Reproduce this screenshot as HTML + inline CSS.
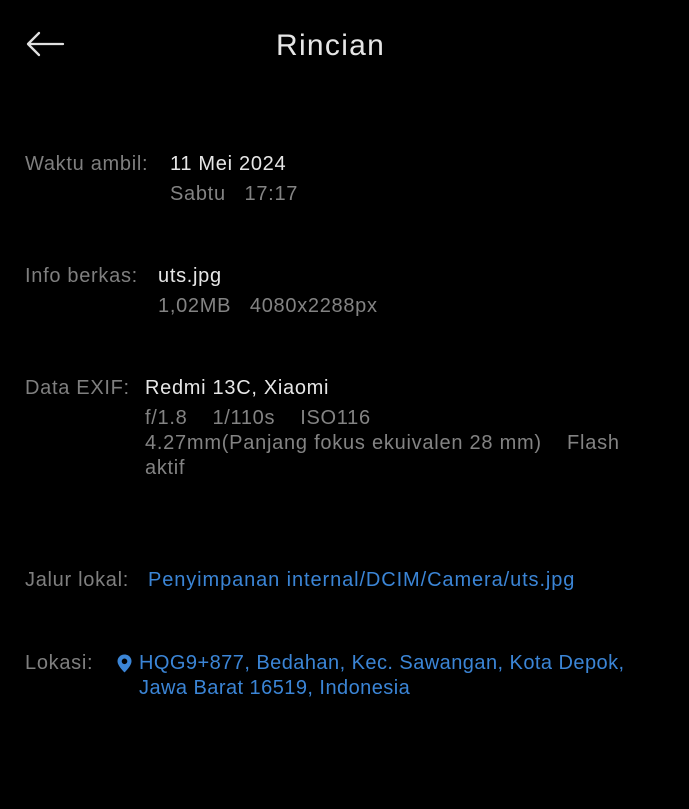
<!DOCTYPE html>
<html><head><meta charset="utf-8"><style>
body{margin:0;width:689px;height:809px;background:#000;overflow:hidden;font-family:"Liberation Sans",sans-serif;font-size:20px;letter-spacing:0.7px;}
.t{position:absolute;line-height:25px;white-space:nowrap;}
.l{color:#7f7f7f}.v{color:#e6e6e6}.s{color:#838383}.b{color:#3b85d6}
</style></head><body>
<svg style="position:absolute;left:24px;top:30px" width="42" height="28" viewBox="0 0 42 28"><path d="M39 14H4M15 3L4 14L15 25" fill="none" stroke="#e0e0e0" stroke-width="2.3" stroke-linecap="round" stroke-linejoin="round"/></svg>
<div class="t v" style="left:276px;top:28px;font-size:30px;line-height:36px;letter-spacing:1.3px">Rincian</div>

<div class="t l" style="left:25px;top:152px">Waktu ambil:</div>
<div class="t v" style="left:170px;top:152px">11 Mei 2024</div>
<div class="t s" style="left:170px;top:182px">Sabtu&nbsp;&nbsp;&nbsp;17:17</div>

<div class="t l" style="left:25px;top:264px">Info berkas:</div>
<div class="t v" style="left:158px;top:264px">uts.jpg</div>
<div class="t s" style="left:158px;top:294px">1,02MB&nbsp;&nbsp;&nbsp;4080x2288px</div>

<div class="t l" style="left:25px;top:376px">Data EXIF:</div>
<div class="t v" style="left:145px;top:376px">Redmi 13C, Xiaomi</div>
<div class="t s" style="left:145px;top:406px">f/1.8&nbsp;&nbsp;&nbsp;&nbsp;1/110s&nbsp;&nbsp;&nbsp;&nbsp;ISO116</div>
<div class="t s" style="left:145px;top:431px;letter-spacing:0.75px">4.27mm(Panjang fokus ekuivalen 28 mm)&nbsp;&nbsp;&nbsp;&nbsp;Flash</div>
<div class="t s" style="left:145px;top:456px">aktif</div>

<div class="t l" style="left:25px;top:568px">Jalur lokal:</div>
<div class="t b" style="left:148px;top:568px;letter-spacing:0.9px">Penyimpanan internal/DCIM/Camera/uts.jpg</div>

<div class="t l" style="left:25px;top:651px">Lokasi:</div>
<svg style="position:absolute;left:116px;top:654px" width="17" height="19" viewBox="0 0 16 19"><path d="M8 0.5C4 0.5 1 3.5 1 7.3 1 12 8 18.5 8 18.5S15 12 15 7.3C15 3.5 12 0.5 8 0.5Z" fill="#3b85d6"/><circle cx="8" cy="7.3" r="2.8" fill="#000"/></svg>
<div class="t b" style="left:139px;top:651px;letter-spacing:0.45px">HQG9+877, Bedahan, Kec. Sawangan, Kota Depok,</div>
<div class="t b" style="left:139px;top:676px;letter-spacing:0.45px">Jawa Barat 16519, Indonesia</div>
</body></html>
